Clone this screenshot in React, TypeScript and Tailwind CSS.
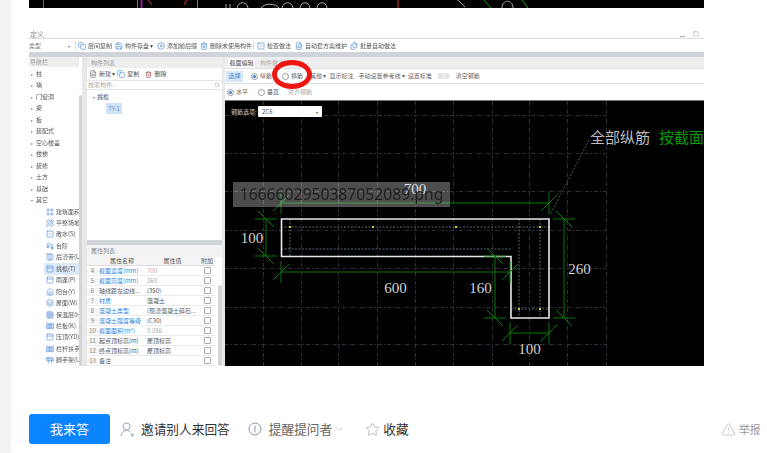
import { Copy, FileText, Files, CirclePlus, ChevronDown, Footprints, Frame, Grid3x3, Home, Layers, PanelTop, PencilRuler, Save, Search, Square, SquareCheck, Star, Trash2, TriangleAlert, Columns3, Fence, Construction } from "lucide-react"
import type { ComponentType } from "react"

const font = { fontFamily: '"Noto Sans CJK SC", sans-serif' }

type IconType = ComponentType<{ size?: number; className?: string; strokeWidth?: number }>

const topItems = ["柱", "墙", "门窗洞", "梁", "板", "装配式", "空心楼盖", "楼梯", "装修", "土方", "基础"]
const subItems: [string, IconType][] = [
  ["建筑面积", Frame],
  ["平整场地", PencilRuler],
  ["散水(S)", SquareCheck],
  ["台阶", Footprints],
  ["后浇带(U", Columns3],
  ["挑檐(T)", PanelTop],
  ["雨蓬(P)", PanelTop],
  ["阳台(Y)", Home],
  ["屋面(W)", Layers],
  ["保温层(H", Grid3x3],
  ["栏板(K)", Fence],
  ["压顶(YD)", PanelTop],
  ["栏杆扶手", Fence],
  ["脚手架(U", Construction],
]

const props = [
  ["4", "截面宽度(mm)", "700", true, true],
  ["5", "截面高度(mm)", "260", true, true],
  ["6", "轴线距左边线...", "(350)", false, false],
  ["7", "材质", "混凝土", true, false],
  ["8", "混凝土类型", "(现浇混凝土碎石...", true, false],
  ["9", "混凝土强度等级", "(C30)", true, false],
  ["10", "截面面积(m²)", "0.086", true, true],
  ["11", "起点顶标高(m)", "屋顶标高", false, false],
  ["12", "终点顶标高(m)", "屋顶标高", false, false],
  ["13", "备注", "", false, false],
] as const

function Radio({ on, label, className }: { on?: boolean; label: string; className?: string }) {
  return (
    <div className={`flex items-center gap-[2px] ${className ?? ""}`}>
      <span className="flex h-[7px] w-[7px] items-center justify-center rounded-full border border-[#999] bg-white">
        {on && <span className="h-[3px] w-[3px] rounded-full bg-[#2f7fe0]" />}
      </span>
      <span>{label}</span>
    </div>
  )
}

function ToolItem({ icon: Icon, label, className }: { icon: IconType; label: string; className: string }) {
  return (
    <div className={`flex items-center gap-[2px] whitespace-nowrap ${className}`}>
      <Icon size={8} className="shrink-0 text-[#4d90d8]" />
      <span>{label}</span>
    </div>
  )
}

function Toolbar() {
  return (
    <div className="flex h-[14px] shrink-0 items-center border-t border-[#ddd]">
      <div className="flex h-[11px] w-[43px] items-center justify-between pr-[2px] text-[#777]">
        <span>类型</span>
        <span className="text-[4px]">▾</span>
      </div>
      <span className="ml-[3px] mr-[2px] h-[9px] w-px bg-[#ddd]" />
      <ToolItem icon={Copy} label="层间复制" className="w-[37px]" />
      <ToolItem icon={Save} label="构件存盘 ▾" className="w-[42px]" />
      <ToolItem icon={CirclePlus} label="添加前后缀" className="w-[43px]" />
      <ToolItem icon={Trash2} label="删除未使用构件" className="w-[53px]" />
      <span className="mr-[3px] h-[9px] w-px bg-[#ddd]" />
      <ToolItem icon={SquareCheck} label="检查做法" className="w-[38px]" />
      <ToolItem icon={FileText} label="自动套方案维护" className="w-[55px]" />
      <ToolItem icon={Files} label="批量自动做法" className="w-[60px]" />
    </div>
  )
}

function Sidebar() {
  return (
    <div className="flex w-[58px] shrink-0 bg-white">
      <div className="flex w-[50px] flex-col">
        <div className="flex h-[11px] items-center bg-[#eeeeee] pl-[1px] text-[#999]">导航栏</div>
        <div className="flex flex-col pt-[0.5px]">
          {topItems.map((t) => (
            <div key={t} className="flex h-[11.5px] items-center pl-[2px]">
              <span className="mr-[3px] text-[4px] text-[#888]">▸</span>
              {t}
            </div>
          ))}
          <div className="flex h-[11.5px] items-center pl-[2px]">
            <span className="mr-[3px] text-[4px] text-[#888]">▾</span>其它
          </div>
          {subItems.map(([t, Icon]) => (
            <div key={t} className={`ml-[15px] flex h-[11.45px] items-center overflow-hidden whitespace-nowrap pl-[2px] ${t === "挑檐(T)" ? "bg-[#dbe9f8]" : ""}`}>
              <Icon size={8} className="mr-[2px] shrink-0 text-[#5b93dc]" />
              {t}
            </div>
          ))}
        </div>
      </div>
      <div className="mt-[38px] h-[271px] w-[3px] rounded-sm bg-[#d4d4d4]" />
      <div className="w-[5px] bg-[#e8e8e8]" />
    </div>
  )
}

function ComponentPanel() {
  return (
    <div className="flex w-[135px] shrink-0 flex-col bg-white">
      <div className="flex h-[11px] shrink-0 items-center bg-[#eeeeee] pl-[4px] text-[#999]">构件列表</div>
      <div className="flex h-[13px] shrink-0 items-center gap-[2px] border-b border-[#e4e4e4] pl-[2px]">
        <FileText size={8} className="text-[#777]" />
        <span>新建 ▾</span>
        <Copy size={8} className="text-[#4d90d8]" />
        <span className="mr-[4px]">复制</span>
        <Trash2 size={7} className="text-[#a55]" />
        <span>删除</span>
      </div>
      <div className="flex h-[9px] shrink-0 items-center justify-between border-b border-[#e4e4e4] pl-[1px] pr-[2px] text-[#aaa]">
        <span>搜索构件...</span>
        <Search size={6} />
      </div>
      <div className="flex h-[150px] shrink-0 flex-col pl-[6px] pt-[1px]">
        <div className="flex h-[12px] items-center">
          <span className="mr-[2px] text-[4px] text-[#888]">▾</span>挑檐
        </div>
        <div className="ml-[13px] flex h-[11px] w-[16px] items-center justify-center rounded-[1px] bg-[#cfe3f8] text-[#6b8fb5]">TY-1</div>
      </div>
      <div className="h-[5px] shrink-0 bg-[#d0d3da]" />
      <div className="flex h-[12px] shrink-0 items-center bg-[#f2f2f2] pl-[4px] text-[#888]">属性列表</div>
      <div className="flex min-h-0 flex-1">
        <div className="w-[128px]">
          <div className="grid h-[9px] grid-cols-[11px_48px_53px_16px] items-center border-b border-[#ddd] bg-[#f4f4f4] text-center">
            <div />
            <div>属性名称</div>
            <div>属性值</div>
            <div>附加</div>
          </div>
          {props.map(([n, name, value, link, muted]) => (
            <div key={n} className="grid h-[10px] grid-cols-[11px_48px_53px_16px] items-center border-b border-[#eaeaea]">
              <div className="bg-[#f4f4f4] text-center text-[#888]">{n}</div>
              <div className={`overflow-hidden whitespace-nowrap pl-[1px] ${link ? "text-[#3a7fe0]" : ""}`}>{name}</div>
              <div className={`overflow-hidden whitespace-nowrap pl-[1px] ${muted ? "text-[#aaa]" : ""}`}>{value}</div>
              <div className="flex justify-center">
                <span className="h-[7px] w-[7px] rounded-[1px] border border-[#aaa] bg-white" />
              </div>
            </div>
          ))}
        </div>
        <div className="ml-[3px] mt-[28px] h-[81px] w-[4px] rounded-sm bg-[#d4d4d4]" />
      </div>
    </div>
  )
}

function Canvas() {
  const hGrid = [115, 153, 191, 230, 268, 307, 344]
  const vGrid = [263, 301, 338, 377, 415, 453, 492, 529, 567, 606]
  const ox = 225
  const oy = 101
  const ticksH = [
    [281, 203], [549, 203], [281, 272], [510, 272], [510, 333], [549, 333],
  ]
  const ticksV = [
    [266, 219], [266, 256], [495, 256], [495, 318], [564, 219], [564, 318],
  ]
  return (
    <div className="relative h-[266px] shrink-0 border-t border-[#777] bg-black">
      <svg width="479" height="265" viewBox={`${ox} ${oy} 479 265`} className="block">
        <g stroke="#2b313a" strokeWidth="1" strokeDasharray="4 2 1 2">
          {hGrid.map((y) => <line key={y} x1={ox} x2={606} y1={y + 0.5} y2={y + 0.5} />)}
          {vGrid.map((x) => <line key={x} x1={x + 0.5} x2={x + 0.5} y1={oy} y2={366} />)}
        </g>
        <line x1="589" y1="140" x2="550" y2="215" stroke="#555" strokeDasharray="2 1.5" />
        <g stroke="#566676" strokeWidth="1" strokeDasharray="2 1.5">
          <line x1="281" x2="549" y1="227" y2="227" />
          <line x1="281" x2="511" y1="249" y2="249" />
          <line x1="290" x2="290" y1="219" y2="256" />
          <line x1="519" x2="519" y1="219" y2="318" />
          <line x1="540" x2="540" y1="219" y2="318" />
          <line x1="511" x2="549" y1="309" y2="309" />
        </g>
        <path d="M281.5 219H549V318H511V256.5H281.5Z" fill="none" stroke="#e8e8e8" strokeWidth="1.6" />
        {[[290, 227], [373, 227], [456, 227], [540, 227], [519, 309], [540, 309]].map(([x, y]) => (
          <rect key={`${x}-${y}`} x={x - 1} y={y - 1} width="2" height="2" fill="#e6c62e" />
        ))}
        <g stroke="#087a08" strokeWidth="1" fill="none">
          <path d="M281 203H549M281 272H510M510 333H549M266 219V256M495 256V318M564 219V318" />
          {ticksH.map(([x, y]) => (
            <path key={`h${x}-${y}`} d={`M${x} ${y - 11}V${y + 11}M${x - 8} ${y + 8}L${x + 8} ${y - 8}`} />
          ))}
          {ticksV.map(([x, y]) => (
            <path key={`v${x}-${y}`} d={`M${x - 11} ${y}H${x + 11}M${x - 8} ${y - 8}L${x + 8} ${y + 8}`} />
          ))}
        </g>
        <g fill="#d4d4d4" fontFamily='"Liberation Serif", serif' fontSize="15">
          <text x="415" y="194" textAnchor="middle">700</text>
          <text x="252" y="243" textAnchor="middle">100</text>
          <text x="395.5" y="293" textAnchor="middle">600</text>
          <text x="480.5" y="293" textAnchor="middle">160</text>
          <text x="579.5" y="274" textAnchor="middle">260</text>
          <text x="529.5" y="354" textAnchor="middle">100</text>
        </g>
        <text x="590" y="143" fill="#bdbdbd" fontSize="15" fontFamily='"Noto Sans CJK SC", serif'>全部纵筋</text>
        <text x="659" y="143" fill="#0a9a0a" fontSize="15" fontFamily='"Noto Sans CJK SC", serif'>按截面</text>
      </svg>
      <div className="absolute left-[6px] top-[5px] flex items-center text-[#ccc]">
        <span className="w-[27px]">钢筋选项:</span>
        <div className="flex h-[11px] w-[64px] items-center justify-between rounded-[1px] bg-white px-[4px] text-[#555]">
          <span>2C6</span>
          <span className="text-[4px]">▾</span>
        </div>
      </div>
    </div>
  )
}

function RightPanel() {
  return (
    <div className="flex min-w-0 flex-1 flex-col bg-white">
      <div className="flex h-[11px] shrink-0 items-end bg-[#eeeeee]">
        <div className="ml-[3px] flex h-[10px] w-[27px] items-center justify-center bg-[#f8f8f8]">截面编辑</div>
        <div className="ml-[5px] flex h-[10px] items-center text-[#aaa]">构件做法</div>
      </div>
      <div className="flex h-[16px] shrink-0 items-center whitespace-nowrap border-y border-[#dcdfe4] text-[#666]">
        <div className="ml-[1px] flex h-[11px] w-[17px] items-center justify-center bg-[#d5e7f8] text-[#4d88c8]">选择</div>
        <Radio on label="纵筋" className="ml-[8px]" />
        <Radio label="横筋" className="ml-[10px]" />
        <span className="ml-[7px]">其他 ▾</span>
        <span className="ml-[3px]">显示标注</span>
        <span className="ml-[5px]">手动设置参考线 ▾</span>
        <span className="ml-[3px]">设置标准</span>
        <span className="ml-[6px] text-[#ccc]">删除</span>
        <span className="ml-[6px]">清空钢筋</span>
      </div>
      <div className="flex h-[16px] shrink-0 items-center text-[#666]">
        <Radio on label="水平" className="ml-[2px]" />
        <Radio label="垂直" className="ml-[10px]" />
        <span className="ml-[9px] text-[#aaa]">对齐钢筋</span>
      </div>
      <Canvas />
    </div>
  )
}

function Screenshot() {
  return (
    <div className="relative mt-[22px] h-[336px] w-[675px] shrink-0 overflow-hidden bg-white">
      <div className="flex h-full flex-col text-[6px] leading-none text-[#555] blur-[0.6px]" style={font}>
        <div className="flex h-[8px] shrink-0 items-center justify-between bg-white pl-[1px] pr-[5px] text-[7px] text-[#888]">
          <span>定义</span>
          <div className="flex items-center gap-[8px]">
            <span className="mt-[4px] h-px w-[5px] bg-[#aaa]" />
            <Square size={6} className="text-[#999]" />
          </div>
        </div>
        <Toolbar />
        <div className="h-[5px] shrink-0 bg-[#d0d3da]" />
        <div className="flex min-h-0 flex-1">
          <Sidebar />
          <ComponentPanel />
          <div className="w-[3px] shrink-0 bg-[#e8e8e8]" />
          <RightPanel />
        </div>
      </div>
      {/* file name watermark and the red mark sit on top of the picture */}
      <div className="absolute left-[204px] top-[152px] flex h-[25px] w-[217px] items-center justify-center bg-white/30 text-[15.7px] text-[#1f1f1f]" style={{ fontFamily: '"Noto Sans", sans-serif' }}>
        1666602950387052089.png
      </div>
      <div className="absolute left-[243px] top-[30px] h-[29px] w-[40px] rounded-[50%] border-[5px] border-[#ee1610]" />
    </div>
  )
}

function TopStrip() {
  return (
    <svg width="675" height="8" viewBox="29 0 675 8" className="block shrink-0 bg-black">
      <g fill="none" strokeWidth="1">
        <path d="M43.5 0V8" stroke="#1a9a1a" />
        <path d="M137.5 0V8M197.5 0V8" stroke="#777" />
        <path d="M141.5 0V8" stroke="#8b1f9b" strokeWidth="2" />
        <path d="M148 0L152 5M184 5L187 0" stroke="#c33" />
        <path d="M226 8V4M230 8V4M237 8C238 1 247 1 248 8M261 8C264 3 276 3 279 8M282 8C283 1 292 1 293 8M300 8C301 1 309 1 310 8M317 8C318 1 326 1 327 8" stroke="#aaa" />
        <path d="M398 0V8" stroke="#c33" />
        <path d="M458 0L465 7M502 8C502 -1 513 -1 513 8" stroke="#aaa" />
        <path d="M484 0L491 8M522 0L528 8" stroke="#1a9a1a" />
      </g>
    </svg>
  )
}

function Footer() {
  return (
    <div className="mt-[48px] flex h-[30px] items-center text-[12.7px] text-[#333]" style={font}>
      <button className="h-[30px] w-[81px] shrink-0 rounded-[3px] bg-[#0a84ff] text-[13px] text-white">我来答</button>
      <svg width="15" height="15" viewBox="0 0 15 15" fill="none" stroke="#9aa3b2" strokeWidth="1" className="ml-[10px] shrink-0">
        <circle cx="6.5" cy="4.5" r="3.5" />
        <path d="M1 14c0-3.2 2.4-5.5 5.5-5.5 1.6 0 3 .6 4 1.6M10.5 13h3.5M12.2 11.3v3.4" />
      </svg>
      <span className="ml-[6px] shrink-0">邀请别人来回答</span>
      <svg width="14" height="14" viewBox="0 0 14 14" fill="none" stroke="#8c96a8" strokeWidth="1" className="ml-[18px] shrink-0">
        <circle cx="7" cy="7" r="6" />
        <path d="M7 3.5v7" />
      </svg>
      <span className="ml-[7px] shrink-0 text-[#666]">提醒提问者</span>
      <ChevronDown size={12} strokeWidth={1.2} className="ml-[1px] shrink-0 text-[#aaa]" />
      <Star size={15} strokeWidth={1} className="ml-[20px] shrink-0 text-[#8c96a8]" />
      <span className="ml-[3px] shrink-0">收藏</span>
      <TriangleAlert size={15} strokeWidth={1} className="ml-[312px] shrink-0 text-[#aaa]" />
      <span className="ml-[3px] shrink-0 text-[11px] text-[#999]">举报</span>
    </div>
  )
}

export default function App() {
  return (
    <div className="flex h-[453px] w-[767px] overflow-hidden bg-white">
      <div className="w-[11px] shrink-0 bg-[#f1f2f4]" />
      <div className="flex flex-col pl-[18px]">
        <TopStrip />
        <Screenshot />
        <Footer />
      </div>
    </div>
  )
}
